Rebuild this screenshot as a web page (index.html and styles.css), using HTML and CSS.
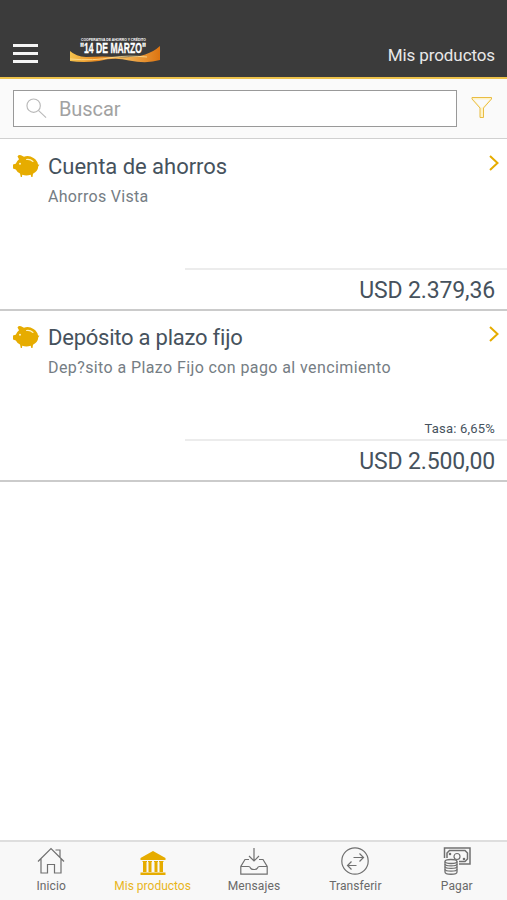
FILE: index.html
```html
<!DOCTYPE html>
<html lang="es">
<head>
<meta charset="utf-8">
<title>Mis productos</title>
<link rel="stylesheet" href="styles.css">
</head>
<body>
<svg width="0" height="0" class="defs">
  <symbol id="pig" viewBox="0 0 27 24">
    <path fill="#e6ac00" d="M4.500 2.500Q5.500.5 8 1.200L11 2.700Q16 1 20.500 4Q24.500 6.500 25 10.500L26.500 10.800L25.300 12.200Q25 17 20 19.800L19.500 23H18.300L17.700 20.800Q13 22 9.200 20.700L9 23H7.800L7 19.500Q4 18 2.800 15.500L0 14.500V10.500L2.700 9.800Q3.500 7.200 6 5.200Z"/>
    <path d="M13.500 5.500Q17 4.800 20 7.500" fill="none" stroke="#fff3c4" stroke-width="1.100" stroke-linecap="round"/>
    <circle cx="7" cy="9.700" r="1" fill="#fff3c4"/>
  </symbol>
  <symbol id="chevron" viewBox="0 0 12 18"><path d="M2 2L9.500 9L2 16" fill="none" stroke="#e6ac00" stroke-width="2"/></symbol>
</svg>
<div class="app">
  <header class="header">
    <div class="burger"><i></i><i></i><i></i></div>
    <svg class="logo" viewBox="0 0 92 30">
      <defs><linearGradient id="gold"><stop offset="0" stop-color="#f4c34e"/><stop offset=".3" stop-color="#e98a20"/><stop offset=".6" stop-color="#f1b75b"/><stop offset="1" stop-color="#dd7410"/></linearGradient></defs>
      <path fill="url(#gold)" d="M1 17Q7 22.500 17 23Q33 22 49 23Q77 25 91 12V26Q78 30 60 26.500Q46 23 30 27Q14 29 1 27Z"/>
      <path d="M1 25Q25 27 43 23.500Q59 21 78 23" fill="none" stroke="#ffe29a" stroke-width=".8"/>
      <text x="12" y="7" textLength="65" lengthAdjust="spacingAndGlyphs" class="logo-small">COOPERATIVA DE AHORRO Y CRÉDITO</text>
      <text x="11" y="19.200" textLength="66" lengthAdjust="spacingAndGlyphs" class="logo-big">"14 DE MARZO"</text>
    </svg>
    <h1 class="title">Mis productos</h1>
  </header>
  <div class="search">
    <div class="field">
      <svg class="lens" viewBox="0 0 22 22" fill="none" stroke="#b9b9b9" stroke-width="1.200"><circle cx="8" cy="8" r="7"/><path d="M13 13L21 20.500"/></svg>
      <span class="placeholder">Buscar</span>
    </div>
    <svg class="filter" viewBox="0 0 22 24" fill="#fff3c8" stroke="#e9bd43" stroke-width="1"><path d="M1 1.500H20.500V3L12.500 12V21.500H9V12L1 3Z"/><path d="M3 3.600H18.500L11.500 11.500H10Z" fill="#fafafa" stroke="none"/></svg>
  </div>
  <main class="list">
    <article class="item">
      <svg class="pig"><use href="#pig"/></svg>
      <div class="info"><h2 class="name n1">Cuenta de ahorros</h2><p class="desc d1">Ahorros Vista</p></div>
      <svg class="chevron"><use href="#chevron"/></svg>
      <div class="totals"><p class="rate"></p><p class="amount">USD 2.379,36</p></div>
    </article>
    <article class="item">
      <svg class="pig"><use href="#pig"/></svg>
      <div class="info"><h2 class="name n2">Depósito a plazo fijo</h2><p class="desc">Dep?sito a Plazo Fijo con pago al vencimiento</p></div>
      <svg class="chevron"><use href="#chevron"/></svg>
      <div class="totals"><p class="rate">Tasa: 6,65%</p><p class="amount">USD 2.500,00</p></div>
    </article>
  </main>
  <nav class="tabs">
    <a class="tab"><svg viewBox="0 0 28 28"><path d="M1 14.500L14 1.500L27 14.500M18.500 3H23V10M4 12V26H10.500V17.500H17.500V26H24V12"/></svg><span>Inicio</span></a>
    <a class="tab active"><svg viewBox="0 0 28 28"><path class="solid" d="M1.500 13V11L14 4L26.500 11V13ZM3.500 14H8V15H7.500V25H4V15H3.500ZM9 14H13V15H12.500V25H9.500V15H9ZM15 14H19V15H18.500V25H15.500V15H15ZM20 14H24.500V15H24V25H20.500V15H20ZM1.500 25.500H26.500V28H1.500Z"/></svg><span>Mis productos</span></a>
    <a class="tab"><svg viewBox="0 0 28 28"><path d="M14 1V14M9 9L14 14L19 9M9 12.500H5L.8 19.500V27.200H27.200V19.500L23 12.500H19M.8 19.500H8.500Q10 19.500 10.500 21Q11 22.500 14 22.500Q17 22.500 17.500 21Q18 19.500 19.500 19.500H27.200"/></svg><span>Mensajes</span></a>
    <a class="tab"><svg viewBox="0 0 28 28"><circle cx="14" cy="14" r="13.200"/><path d="M12.500 10.500H22.500M18.500 6.500L22.500 10.500L18.500 14.500M15.500 18.500H6.500M10.500 14.500L6.500 18.500L10.500 22.500"/></svg><span>Transferir</span></a>
    <a class="tab"><svg viewBox="0 0 28 28"><path stroke-width="1.500" d="M1.500 11V1H27V17H16M4 11V6L6.500 3.500H22L24.500 6V12L22 14.500H16"/><circle cx="14" cy="9.500" r="3"/><circle cx="7" cy="7" r=".7"/><circle cx="21" cy="12" r=".7"/><path class="coins" d="M2 14.500V25C2 28 14 28 14 25V14.500"/><ellipse class="coins" cx="8" cy="14.500" rx="6" ry="2"/><path stroke-width="1.300" d="M2 17C2 19.500 14 19.500 14 17M2 19.500C2 22 14 22 14 19.500M2 22.300C2 24.800 14 24.800 14 22.300"/></svg><span>Pagar</span></a>
  </nav>
</div>
</body>
</html>
```

FILE: styles.css
```css
* { box-sizing: border-box; }
body, h1, h2, p { margin: 0; font-weight: 400; }
body { font-family: Roboto, "Liberation Sans", sans-serif; background: #fff; }
.defs { display: block; }
.app { height: 900px; display: flex; flex-direction: column; overflow: hidden; }
.header { height: 79px; flex: none; background: #3b3b3b; border-bottom: 2px solid #edc34c; display: flex; align-items: flex-start; padding: 0 12px 0 13px; }
.burger { width: 25px; margin-top: 44px; display: flex; flex-direction: column; gap: 5px; }
.burger i { height: 3px; background: #f5f5f5; }
.logo { width: 92px; height: 30px; margin: 34px 0 0 31px; overflow: visible; }
.logo-small { font: bold 4px "Liberation Sans", sans-serif; fill: #fff; }
.logo-big { font: bold 14px "Liberation Sans", sans-serif; fill: #fff; stroke: #fff; stroke-width: .3; }
.title { margin: 44px 0 0 auto; font-size: 17px; line-height: 22px; letter-spacing: -.1px; color: #e8e8e8; }
.search { height: 60px; flex: none; background: #fafafa; border-bottom: 1px solid #d0d0d0; display: flex; align-items: flex-start; padding: 11px 14px 0 13px; }
.field { width: 444px; height: 37px; border: 1px solid #999; background: #fff; display: flex; align-items: center; padding-left: 12px; }
.lens { width: 21px; height: 21px; }
.placeholder { margin-left: 12px; font-size: 20px; letter-spacing: -.1px; color: #a2a2a2; }
.filter { width: 22px; height: 24px; margin: 6px 0 0 14px; }
.item { height: 171px; border-bottom: 2px solid #cbcbcb; display: grid; grid-template-columns: 35px 1fr 12px; grid-template-rows: 107px 1fr; padding: 1px 7px 0 13px; }
.item:first-child { height: 172px; padding-top: 2px; }
.pig { width: 27px; height: 24px; margin-top: 13px; }
.name { margin-top: 12px; font-size: 22px; line-height: 28px; color: #46525d; white-space: nowrap; }
.n1 { letter-spacing: -.03px; }
.n2 { letter-spacing: -.23px; }
.desc { margin-top: 5px; font-size: 16px; line-height: 22px; letter-spacing: .4px; color: #757d84; white-space: nowrap; }
.d1 { letter-spacing: .3px; }
.chevron { width: 12px; height: 18px; margin-top: 13px; }
.totals { grid-column: 1 / -1; margin: 0 -7px 0 172px; text-align: right; color: #46525d; }
.rate { height: 22px; padding-right: 12px; font-size: 13px; line-height: 19px; letter-spacing: .2px; border-bottom: 2px solid #ececec; }
.amount { padding-right: 12px; font-size: 23px; line-height: 41px; letter-spacing: -.15px; }
.tabs { margin-top: auto; height: 60px; flex: none; background: #f8f8f8; border-top: 2px solid #dedede; display: grid; grid-template-columns: repeat(5, 1fr); }
.tab { display: flex; flex-direction: column; align-items: center; padding: 5px 0 0 1px; color: #696969; font-size: 12px; }
.tab svg { width: 28px; height: 28px; fill: none; stroke: #707070; stroke-width: 1.200; }
.tab span { margin-top: 3px; line-height: 17px; letter-spacing: .1px; white-space: nowrap; }
.tab.active { color: #e8b51d; }
.tab.active span { letter-spacing: 0; }
.tab .solid { fill: #e6ac00; stroke: none; }
.tab .coins { fill: #f8f8f8; stroke-width: 1.300; }
```
